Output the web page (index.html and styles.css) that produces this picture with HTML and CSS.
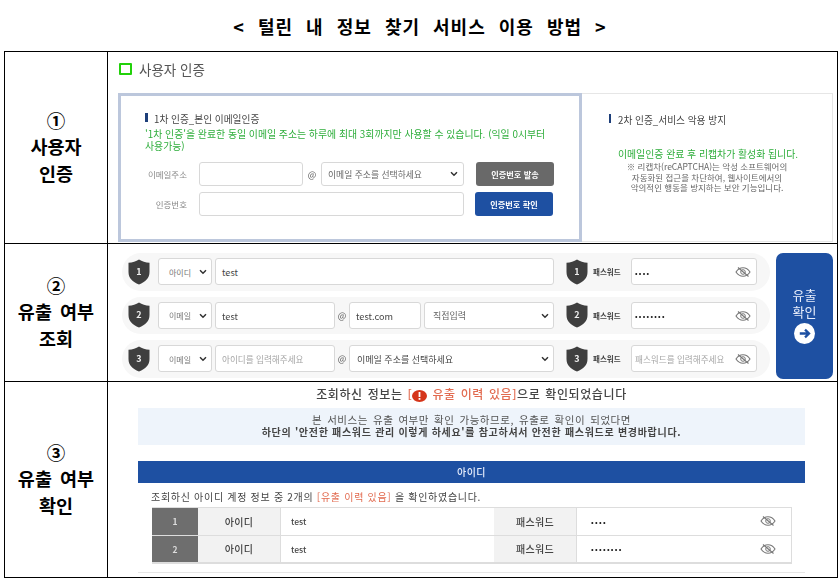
FILE: index.html
```html
<!DOCTYPE html>
<html lang="ko">
<head>
<meta charset="utf-8">
<title>털린 내 정보 찾기 서비스 이용 방법</title>
<link rel="stylesheet" href="styles.css">
</head>
<body>
<svg class="defs" width="0" height="0" aria-hidden="true">
  <symbol id="shield" viewBox="0 0 22 26"><path d="M11 0.5C14 2.6 17.5 3.6 21.5 3.8V13C21.5 19 17.5 23 11 25.5C4.500 23 0.500 19 0.500 13V3.800C4.500 3.600 8 2.600 11 0.500Z" fill="#3f3f3f"/></symbol>
  <symbol id="eye" viewBox="0 0 16 12"><path d="M1 6C3 3 5.500 1.800 8 1.800S13 3 15 6C13 9 10.500 10.200 8 10.200S3 9 1 6Z" fill="none" stroke="#777" stroke-width="1.100"/><circle cx="8" cy="6" r="2.300" fill="none" stroke="#777" stroke-width="1"/><path d="M3 1.500L13.500 10.500" stroke="#777" stroke-width="1.100"/></symbol>
  <symbol id="chev" viewBox="0 0 8 6"><path d="M1 1.300L4 4.300L7 1.300" fill="none" stroke="#333" stroke-width="1.500"/></symbol>
</svg>

<h1 class="title">&lt; 털린 내 정보 찾기 서비스 이용 방법 &gt;</h1>

<main class="sheet">
  <div class="step step-1"><span>①</span><span>사용자</span><span>인증</span></div>
  <section class="cell cell-auth">
    <h2 class="auth-head"><i class="green-box"></i>사용자 인증</h2>
    <div class="auth-panels">
      <div class="panel-first">
        <h3 class="bar-title">1차 인증_본인 이메일인증</h3>
        <p class="green-note">'1차 인증'을 완료한 동일 이메일 주소는 하루에 최대 3회까지만 사용할 수 있습니다. (익일 0시부터<br>사용가능)</p>
        <div class="auth-row">
          <span class="auth-label">이메일주소</span>
          <span class="field auth-mail"></span>
          <span class="at at-auth">@</span>
          <span class="field auth-select">이메일 주소를 선택하세요<svg class="chev"><use href="#chev"/></svg></span>
          <span class="auth-btn btn-gray">인증번호 발송</span>
        </div>
        <div class="auth-row">
          <span class="auth-label">인증번호</span>
          <span class="field auth-code"></span>
          <span class="auth-btn btn-blue">인증번호 확인</span>
        </div>
      </div>
      <div class="panel-second">
        <h3 class="bar-title bar-thin">2차 인증_서비스 악용 방지</h3>
        <p class="captcha-green">이메일인증 완료 후 리캡차가 활성화 됩니다.</p>
        <p class="captcha-gray">※ 리캡차(reCAPTCHA)는 악성 소프트웨어의<br>자동화된 접근을 차단하여, 웹사이트에서의<br>악의적인 행동을 방지하는 보안 기능입니다.</p>
      </div>
    </div>
  </section>

  <div class="step step-2"><span>②</span><span>유출 여부</span><span>조회</span></div>
  <section class="cell cell-query">
    <div class="query-rows">
      <div class="pill">
        <span class="shield"><svg><use href="#shield"/></svg><b>1</b></span>
        <span class="field sel">아이디<svg class="chev"><use href="#chev"/></svg></span>
        <span class="field q-id">test</span>
        <span class="shield shield-pw"><svg><use href="#shield"/></svg><b>1</b></span>
        <span class="pw-label">패스워드</span>
        <span class="field pw"><em class="dots">••••</em><svg class="eye"><use href="#eye"/></svg></span>
      </div>
      <div class="pill">
        <span class="shield"><svg><use href="#shield"/></svg><b>2</b></span>
        <span class="field sel">이메일<svg class="chev"><use href="#chev"/></svg></span>
        <span class="field q-user">test</span>
        <span class="at">@</span>
        <span class="field q-domain">test.com</span>
        <span class="field q-direct">직접입력<svg class="chev"><use href="#chev"/></svg></span>
        <span class="shield shield-pw"><svg><use href="#shield"/></svg><b>2</b></span>
        <span class="pw-label">패스워드</span>
        <span class="field pw"><em class="dots">••••••••</em><svg class="eye"><use href="#eye"/></svg></span>
      </div>
      <div class="pill">
        <span class="shield"><svg><use href="#shield"/></svg><b>3</b></span>
        <span class="field sel">이메일<svg class="chev"><use href="#chev"/></svg></span>
        <span class="field q-user holder">아이디를 입력해주세요</span>
        <span class="at">@</span>
        <span class="field q-choose">이메일 주소를 선택하세요<svg class="chev"><use href="#chev"/></svg></span>
        <span class="shield shield-pw"><svg><use href="#shield"/></svg><b>3</b></span>
        <span class="pw-label">패스워드</span>
        <span class="field pw holder pw-holder">패스워드를 입력해주세요<svg class="eye"><use href="#eye"/></svg></span>
      </div>
    </div>
    <div class="leak-btn">
      <span>유출</span><span>확인</span>
      <svg class="leak-arrow" viewBox="0 0 20 20"><circle cx="10" cy="10" r="10" fill="#fff"/><path d="M5.500 10H14M10.500 6.300L14.300 10L10.500 13.700" fill="none" stroke="#1e50a2" stroke-width="2.200"/></svg>
    </div>
  </section>

  <div class="step step-3"><span>③</span><span>유출 여부</span><span>확인</span></div>
  <section class="cell cell-result">
    <h2 class="result-head">조회하신 정보는 <span class="red">[<svg class="alert" viewBox="0 0 15 12"><ellipse cx="7.500" cy="6" rx="7.500" ry="6" fill="#d5351a"/><rect x="6.600" y="2" width="1.800" height="5" fill="#fff"/><rect x="6.600" y="8" width="1.800" height="1.800" fill="#fff"/></svg> 유출 이력 있음]</span>으로 확인되었습니다</h2>
    <div class="notice">
      <p class="notice-plain">본 서비스는 유출 여부만 확인 가능하므로, 유출로 확인이 되었다면</p>
      <p class="notice-strong">하단의 '안전한 패스워드 관리 이렇게 하세요'를 참고하셔서 안전한 패스워드로 변경바랍니다.</p>
    </div>
    <div class="blue-bar">아이디</div>
    <p class="result-line">조회하신 아이디 계정 정보 중 2개의 <span class="red">[유출 이력 있음]</span> 을 확인하였습니다.</p>
    <div class="result-table">
      <div class="t-num">1</div><div class="t-key">아이디</div><div class="t-val">test</div><div class="t-key">패스워드</div><div class="t-val t-pw"><em class="dots">••••</em><svg class="eye"><use href="#eye"/></svg></div>
      <div class="t-num">2</div><div class="t-key">아이디</div><div class="t-val">test</div><div class="t-key">패스워드</div><div class="t-val t-pw"><em class="dots">••••••••</em><svg class="eye"><use href="#eye"/></svg></div>
    </div>
    <hr class="end-rule">
  </section>
</main>
</body>
</html>
```
FILE: styles.css
```css
* { box-sizing: border-box; }
html, body { margin: 0; padding: 0; background: #fff; }
body {
  width: 840px;
  height: 585px;
  overflow: hidden;
  font-family: "Noto Sans CJK KR", "Noto Sans", sans-serif;
  color: #333;
}
.defs { position: absolute; }
h1, h2, h3, p { margin: 0; font-weight: normal; }
em { font-style: normal; }

.title {
  height: 51px;
  padding-top: 14px;
  text-align: center;
  font-size: 18px;
  line-height: 25px;
  font-weight: 700;
  color: #000;
  letter-spacing: 1px;
  word-spacing: 7px;
}

.sheet {
  margin-left: 4px;
  width: 834px;
  height: 527px;
  border: 1px solid #000;
  display: grid;
  grid-template-columns: 103px 729px;
  grid-template-rows: 192px 138px 195px;
}
.step {
  border-right: 1px solid #000;
  border-bottom: 1px solid #000;
  display: flex;
  flex-direction: column;
  justify-content: center;
  align-items: center;
  padding-bottom: 2px;
  font-size: 18.500px;
  line-height: 26.500px;
  font-weight: 700;
  color: #000;
  word-spacing: 3px;
}
.step-3 { border-bottom: 0; }
.cell { border-bottom: 1px solid #000; min-width: 0; }
.cell-result { border-bottom: 0; }
.cell > * { filter: blur(0.3px); }

/* row 1 */
.cell-auth { padding-left: 10px; }
.auth-head {
  height: 41px;
  display: flex;
  align-items: center;
  gap: 7px;
  padding: 0 0 8px 1px;
  font-size: 13.500px;
  color: #555;
}
.green-box {
  width: 13px;
  height: 12px;
  border: 2.500px solid #22d10a;
  border-radius: 1px;
}
.auth-panels { display: flex; width: 715px; height: 149px; }
.panel-first {
  width: 464px;
  border: 3px solid #bcc7dc;
  padding: 17px 0 0 24px;
}
.panel-second {
  width: 251px;
  border: 1px solid #e6e6e6;
  border-left: 0;
  padding: 20px 0 0 27px;
}
.bar-title {
  font-size: 9.700px;
  line-height: 12px;
  color: #444;
  padding-left: 9px;
  position: relative;
}
.bar-title::before {
  content: "";
  position: absolute;
  left: 0;
  top: 0;
  width: 2.500px;
  height: 9px;
  background: #1e3f7a;
}
.bar-thin::before { width: 2px; }
.green-note {
  margin: 3px 0 10px;
  font-size: 9.900px;
  line-height: 12px;
  color: #2fae3c;
}
.auth-row { display: flex; align-items: stretch; height: 24px; margin-bottom: 6px; }
.auth-label {
  width: 42px;
  margin-right: 12px;
  text-align: right;
  font-size: 8.500px;
  line-height: 24px;
  color: #888;
  white-space: nowrap;
}
.field {
  display: flex;
  align-items: center;
  background: #fff;
  border: 1px solid #d8d8d8;
  border-radius: 3px;
  font-size: 9px;
  color: #444;
  padding-left: 6px;
  white-space: nowrap;
  overflow: hidden;
}
.auth-mail { width: 104px; }
.at { width: 14px; font-size: 9px; text-align: center; align-self: center; color: #555; }
.at-auth { width: 18px; }
.auth-select { width: 143px; color: #666; font-size: 8.800px; justify-content: space-between; padding-right: 5px; }
.auth-code { width: 265px; }
.auth-btn {
  margin-left: 12px;
  width: 78px;
  border-radius: 3px;
  color: #fff;
  font-size: 8.200px;
  font-weight: 700;
  line-height: 24px;
  text-align: center;
  white-space: nowrap;
}
.btn-gray { background: #696969; }
.btn-blue { background: #1e50a2; margin-left: 11px; }
.chev { width: 8px; height: 6px; flex: none; }

.captcha-green {
  margin-top: 21px;
  margin-left: -26px;
  text-align: center;
  font-size: 9.900px;
  line-height: 14px;
  color: #2fae3c;
  width: 250px;
}
.captcha-gray {
  margin-left: -27px;
  width: 250px;
  text-align: center;
  font-size: 8.500px;
  line-height: 10.500px;
  color: #666;
}

/* row 2 */
.cell-query {
  display: flex;
  gap: 6px;
  padding: 9px 0 0 14px;
}
.query-rows { width: 648px; display: flex; flex-direction: column; gap: 6px; }
.pill {
  height: 37.500px;
  background: #f7f7f7;
  border-radius: 19px;
  display: flex;
  align-items: center;
  padding-left: 6px;
}
.shield { position: relative; width: 22px; height: 26px; display: block; flex: none; }
.shield svg { width: 22px; height: 26px; display: block; }
.shield b {
  position: absolute;
  inset: 0;
  text-align: center;
  font-size: 9px;
  line-height: 25px;
  color: #eee;
}
.sel {
  margin-left: 8px;
  width: 54px;
  height: 27px;
  flex: none;
  justify-content: space-between;
  padding: 0 4px 0 10px;
  font-size: 8px;
  color: #777;
}
.pill .field { height: 27px; padding-top: 1px; }
.q-id { margin-left: 3px; width: 339px; font-size: 9.200px; }
.q-user { margin-left: 3px; width: 120px; font-size: 9.200px; }
.q-domain { width: 72px; margin-left: 0; font-size: 9.200px; margin-right: 3px; }
.q-direct { width: 130px; justify-content: space-between; padding: 0 4px 0 8px; font-size: 9px; color: #666; }
.q-choose { width: 205px; justify-content: space-between; padding: 0 4px 0 7px; font-size: 9px; color: #444; }
.holder { color: #a5a5a5; }
.q-user.holder { font-size: 8.600px; }
.shield-pw { margin-left: 12px; }
.pw-label {
  margin-left: 5px;
  width: 38px;
  font-size: 7.500px;
  font-weight: 700;
  color: #444;
  white-space: nowrap;
}
.pw { width: 126px; padding: 0 4px 0 3px; position: relative; }
.pw-holder { font-size: 8.600px; }
.dots { font-size: 7.500px; letter-spacing: 1.300px; color: #222; }
.eye { width: 16px; height: 12px; flex: none; }
.pw .eye { position: absolute; right: 5px; top: 7px; }
.leak-btn {
  width: 57px;
  height: 126px;
  background: #1e50a2;
  border-radius: 7px;
  color: #e8eefc;
  display: flex;
  flex-direction: column;
  align-items: center;
  justify-content: center;
  font-size: 13px;
  line-height: 17px;
  padding-bottom: 3px;
}
.leak-arrow { width: 21px; height: 21px; margin-top: 3px; }

/* row 3 */
.cell-result { padding-left: 30px; }
.result-head {
  width: 667px;
  height: 26px;
  text-align: center;
  font-size: 12px;
  line-height: 24px;
  font-weight: 500;
  color: #444;
  white-space: nowrap;
  letter-spacing: 0.600px;
  word-spacing: 1px;
}
.red { color: #e26b50; }
.alert { width: 15px; height: 12px; vertical-align: -3px; }
.notice {
  width: 667px;
  height: 37px;
  background: #eef4fb;
  text-align: center;
  line-height: 12px;
  padding-top: 6px;
  color: #555;
}
.notice-plain { font-size: 10.500px; letter-spacing: 0.550px; word-spacing: 1.500px; }
.notice-strong { font-size: 10px; letter-spacing: 0.700px; font-weight: 700; color: #444; }
.blue-bar {
  margin-top: 16px;
  width: 667px;
  height: 22px;
  background: #1e50a2;
  color: #e8eefc;
  text-align: center;
  font-size: 10px;
  letter-spacing: 0.500px;
  font-weight: 500;
  line-height: 22px;
}
.result-line {
  padding: 7px 0 0 13px;
  height: 24px;
  font-size: 10px;
  letter-spacing: 0.700px;
  line-height: 13px;
  color: #444;
  white-space: nowrap;
}
.result-table {
  margin-left: 14px;
  width: 640px;
  display: grid;
  grid-template-columns: 46px 83px 213px 83px 215px;
  grid-auto-rows: 27.500px;
  border-right: 1px solid #ddd;
  border-bottom: 1px solid #ddd;
  border-top: 1px solid #ddd;
}
.t-num {
  background: #6e6e6e;
  color: #ddd;
  font-size: 8.500px;
  font-weight: 700;
  display: flex;
  align-items: center;
  justify-content: center;
  border-bottom: 1px solid #ddd;
}
.t-key {
  background: #f2f2f2;
  color: #444;
  font-size: 10px;
  letter-spacing: 0.300px;
  font-weight: 500;
  display: flex;
  align-items: center;
  justify-content: center;
  border-bottom: 1px solid #ddd;
  border-right: 1px solid #ddd;
}
.t-val {
  color: #444;
  font-size: 8.500px;
  font-weight: 500;
  display: flex;
  align-items: center;
  padding-left: 10px;
  border-bottom: 1px solid #ddd;
}
.t-pw { justify-content: space-between; padding: 0 16px 0 14px; }
.end-rule {
  margin: 8px 0 0;
  width: 667px;
  height: 1px;
  border: 0;
  background: #e6e6e6;
}
```
